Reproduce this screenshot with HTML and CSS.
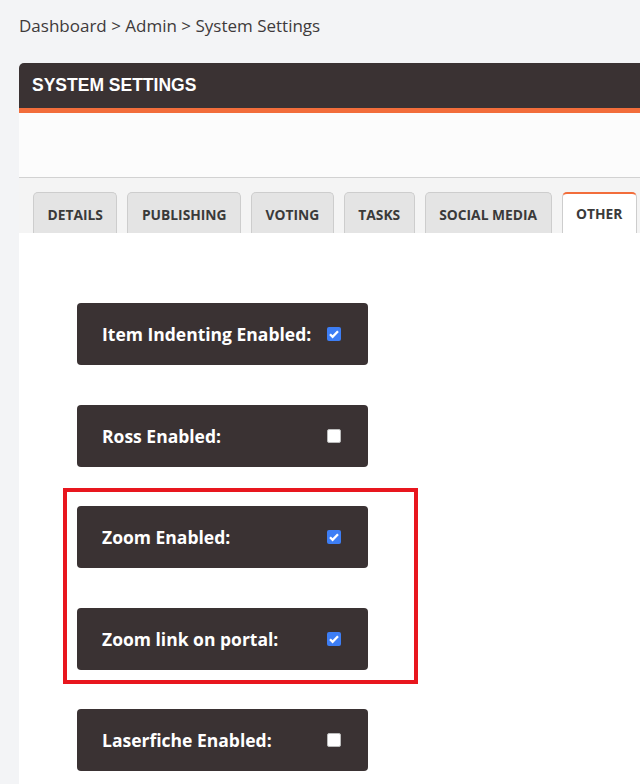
FILE: index.html
```
<!DOCTYPE html>
<html>
<head>
    <title>System Settings</title>
    <link rel="stylesheet" href="styles.css">
</head>
<body>
    <div class="breadcrumb">Dashboard &gt; Admin &gt; System Settings</div>

    <div class="card">
        <div class="card-header">SYSTEM SETTINGS</div>
        <div class="card-sub"></div>

        <div class="tabs">
            <div class="tab">DETAILS</div>
            <div class="tab">PUBLISHING</div>
            <div class="tab">VOTING</div>
            <div class="tab">TASKS</div>
            <div class="tab">SOCIAL MEDIA</div>
            <div class="tab active">OTHER</div>
        </div>

        <div class="tab-content">
            <div class="setting">
                <label for="indent">Item Indenting Enabled:</label>
                <input type="checkbox" id="indent" checked>
            </div>
            <div class="setting">
                <label for="ross">Ross Enabled:</label>
                <input type="checkbox" id="ross">
            </div>
            <div class="highlight">
                <div class="setting">
                    <label for="zoom">Zoom Enabled:</label>
                    <input type="checkbox" id="zoom" checked>
                </div>
                <div class="setting">
                    <label for="zoomlink">Zoom link on portal:</label>
                    <input type="checkbox" id="zoomlink" checked>
                </div>
            </div>
            <div class="setting">
                <label for="laser">Laserfiche Enabled:</label>
                <input type="checkbox" id="laser">
            </div>
        </div>
    </div>
</body>
</html>
```

FILE: styles.css
```
body {
    margin: 0;
    padding: 0;
    background: #f3f4f6;
    font-family: 'Open Sans', sans-serif;
    color: #3a3233;
    overflow: hidden;
}

.breadcrumb {
    padding: 14px 19px 0;
    height: 63px;
    box-sizing: border-box;
    font-size: 17px;
    color: #3e3a3b;
}

.card {
    margin-left: 19px;
    width: 680px;
    border-radius: 5px 0 0 0;
    overflow: hidden;
    background: #fff;
}

.card-header {
    background: #3a3233;
    color: #fff;
    font-family: 'Liberation Sans', Arial, sans-serif;
    font-weight: bold;
    font-size: 17.5px;
    height: 45px;
    line-height: 45px;
    padding-left: 13px;
    border-bottom: 5px solid #f26d3b;
}

.card-sub {
    height: 64px;
    background: #fcfcfc;
    border-bottom: 1px solid #d2d2d2;
}

.tabs {
    background: #f4f4f4;
    padding: 14px 0 0 14px;
    display: flex;
    gap: 10px;
    align-items: flex-end;
}

.tab {
    height: 41px;
    box-sizing: border-box;
    padding: 0 13.5px;
    line-height: 43px;
    background: #e4e4e4;
    border: 1px solid #cdcdcd;
    border-bottom: none;
    border-radius: 5px 5px 0 0;
    font-size: 13.8px;
    font-weight: bold;
    color: #3a3a3a;
}

.tab.active {
    background: #fff;
    border-top: 2px solid #f26d3b;
    line-height: 40px;
}

.tab-content {
    background: #fff;
    padding: 70px 0 20px 58px;
}

.setting {
    width: 291px;
    height: 62px;
    box-sizing: border-box;
    margin-bottom: 39.5px;
    padding: 0 27px 0 25px;
    background: #3a3233;
    border-radius: 4px;
    display: flex;
    align-items: center;
    justify-content: space-between;
}

.setting label {
    color: #fff;
    font-weight: bold;
    font-size: 17.5px;
}

.setting input {
    appearance: none;
    margin: 0;
    width: 14px;
    height: 14px;
    border-radius: 2px;
    background: #fff;
    border: 1px solid #bbb;
    box-sizing: border-box;
}

.setting input:checked {
    background: #3d7ef5 url("data:image/svg+xml;utf8,<svg xmlns='http://www.w3.org/2000/svg' viewBox='0 0 14 14'><path d='M3 7.2l2.6 2.6 5.4-5.6' fill='none' stroke='white' stroke-width='2.3'/></svg>") center / 14px 14px no-repeat;
    border: none;
}

.highlight {
    position: relative;
    width: 291px;
}

.highlight::after {
    content: "";
    position: absolute;
    top: -18px;
    left: -14px;
    right: -50px;
    bottom: -14px;
    border: 4px solid #e8161e;
}
```
